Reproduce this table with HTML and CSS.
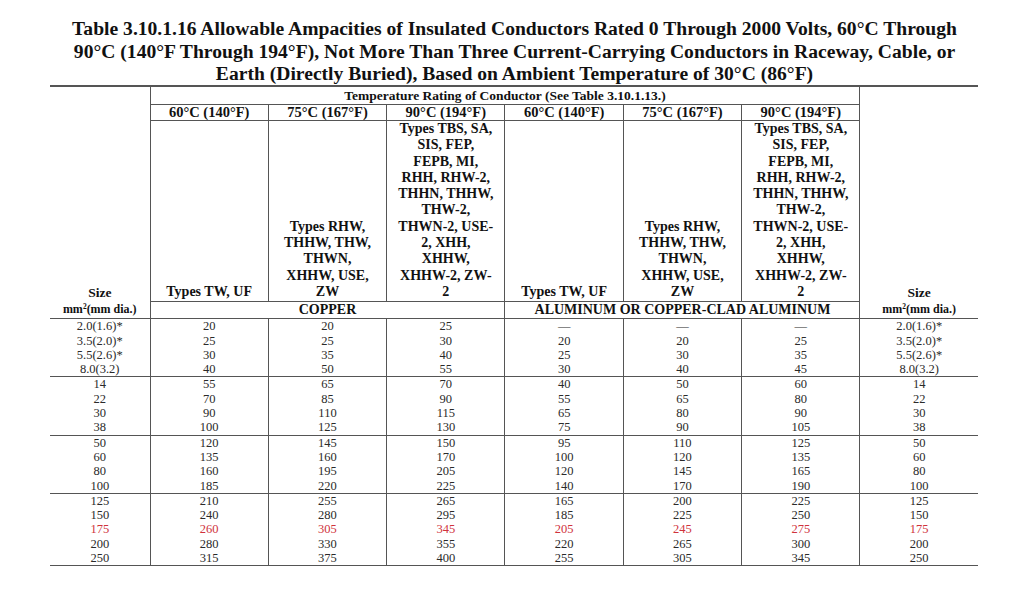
FILE: index.html
```html
<!DOCTYPE html>
<html>
<head>
<meta charset="utf-8">
<link rel="stylesheet" href="styles.css">
</head>
<body>
<div class="page">
  <h1 class="title">Table 3.10.1.16 Allowable Ampacities of Insulated Conductors Rated 0 Through 2000 Volts, 60°C Through<br>90°C (140°F Through 194°F), Not More Than Three Current-Carrying Conductors in Raceway, Cable, or<br>Earth (Directly Buried), Based on Ambient Temperature of 30°C (86°F)</h1>
  <table class="amp">
    <colgroup>
      <col class="c-size-l">
      <col class="c-val"><col class="c-val"><col class="c-val">
      <col class="c-val"><col class="c-val"><col class="c-val">
      <col class="c-size-r">
    </colgroup>
    <thead>
      <tr class="h-rating">
        <th rowspan="4" class="size-head left">Size<br><span class="mm">mm<sup>2</sup>(mm dia.)</span></th>
        <th colspan="6">Temperature Rating of Conductor (See Table 3.10.1.13.)</th>
        <th rowspan="4" class="size-head right">Size<br><span class="mm">mm<sup>2</sup>(mm dia.)</span></th>
      </tr>
      <tr class="h-temp">
        <th>60°C (140°F)</th><th>75°C (167°F)</th><th>90°C (194°F)</th>
        <th>60°C (140°F)</th><th>75°C (167°F)</th><th>90°C (194°F)</th>
      </tr>
      <tr class="h-types">
        <th>Types TW, UF</th>
        <th>Types RHW,<br>THHW, THW,<br>THWN,<br>XHHW, USE,<br>ZW</th>
        <th>Types TBS, SA,<br>SIS, FEP,<br>FEPB, MI,<br>RHH, RHW-2,<br>THHN, THHW,<br>THW-2,<br>THWN-2, USE-<br>2, XHH,<br>XHHW,<br>XHHW-2, ZW-<br>2</th>
        <th>Types TW, UF</th>
        <th>Types RHW,<br>THHW, THW,<br>THWN,<br>XHHW, USE,<br>ZW</th>
        <th>Types TBS, SA,<br>SIS, FEP,<br>FEPB, MI,<br>RHH, RHW-2,<br>THHN, THHW,<br>THW-2,<br>THWN-2, USE-<br>2, XHH,<br>XHHW,<br>XHHW-2, ZW-<br>2</th>
      </tr>
      <tr class="h-metal">
        <th colspan="3">COPPER</th>
        <th colspan="3">ALUMINUM OR COPPER-CLAD ALUMINUM</th>
      </tr>
    </thead>
    <tbody>
      <tr class="g"><td>2.0(1.6)*</td><td>20</td><td>20</td><td>25</td><td>—</td><td>—</td><td>—</td><td>2.0(1.6)*</td></tr>
      <tr><td>3.5(2.0)*</td><td>25</td><td>25</td><td>30</td><td>20</td><td>20</td><td>25</td><td>3.5(2.0)*</td></tr>
      <tr><td>5.5(2.6)*</td><td>30</td><td>35</td><td>40</td><td>25</td><td>30</td><td>35</td><td>5.5(2.6)*</td></tr>
      <tr><td>8.0(3.2)</td><td>40</td><td>50</td><td>55</td><td>30</td><td>40</td><td>45</td><td>8.0(3.2)</td></tr>
      <tr class="g"><td>14</td><td>55</td><td>65</td><td>70</td><td>40</td><td>50</td><td>60</td><td>14</td></tr>
      <tr><td>22</td><td>70</td><td>85</td><td>90</td><td>55</td><td>65</td><td>80</td><td>22</td></tr>
      <tr><td>30</td><td>90</td><td>110</td><td>115</td><td>65</td><td>80</td><td>90</td><td>30</td></tr>
      <tr><td>38</td><td>100</td><td>125</td><td>130</td><td>75</td><td>90</td><td>105</td><td>38</td></tr>
      <tr class="g"><td>50</td><td>120</td><td>145</td><td>150</td><td>95</td><td>110</td><td>125</td><td>50</td></tr>
      <tr><td>60</td><td>135</td><td>160</td><td>170</td><td>100</td><td>120</td><td>135</td><td>60</td></tr>
      <tr><td>80</td><td>160</td><td>195</td><td>205</td><td>120</td><td>145</td><td>165</td><td>80</td></tr>
      <tr><td>100</td><td>185</td><td>220</td><td>225</td><td>140</td><td>170</td><td>190</td><td>100</td></tr>
      <tr class="g"><td>125</td><td>210</td><td>255</td><td>265</td><td>165</td><td>200</td><td>225</td><td>125</td></tr>
      <tr><td>150</td><td>240</td><td>280</td><td>295</td><td>185</td><td>225</td><td>250</td><td>150</td></tr>
      <tr class="hl"><td>175</td><td>260</td><td>305</td><td>345</td><td>205</td><td>245</td><td>275</td><td>175</td></tr>
      <tr><td>200</td><td>280</td><td>330</td><td>355</td><td>220</td><td>265</td><td>300</td><td>200</td></tr>
      <tr class="last"><td>250</td><td>315</td><td>375</td><td>400</td><td>255</td><td>305</td><td>345</td><td>250</td></tr>
    </tbody>
  </table>
</div>
</body>
</html>
```

FILE: styles.css
```css
html, body {
  margin: 0;
  padding: 0;
  background: #ffffff;
}

.page {
  width: 1024px;
  padding: 18px 0 0 0;
  font-family: "Liberation Serif", "Times New Roman", serif;
  color: #222;
}

.title {
  margin: 0;
  font-size: 19.6px;
  line-height: 22.5px;
  font-weight: bold;
  text-align: center;
  color: #111;
  padding-left: 5px;
  height: 67px;
}

.amp {
  margin-left: 50px;
  width: 928px;
  border-collapse: collapse;
  table-layout: fixed;
  border-top: 2px solid #555;
}

.c-size-l { width: 100px; }
.c-val { width: 118.33px; }
.c-size-r { width: 118px; }

.amp th {
  font-weight: bold;
  font-size: 14px;
  color: #111;
  padding: 0;
  text-align: center;
  white-space: nowrap;
}

.amp thead th {
  border: 1px solid #555;
}

.amp th.size-head {
  vertical-align: bottom;
  line-height: 16px;
  padding-bottom: 1px;
}

.amp th.size-head.left {
  border-left: none;
}

.amp th.size-head.right {
  border-right: none;
}

.amp .mm {
  font-size: 12px;
  line-height: 14px;
}

.amp .mm sup {
  font-size: 7.5px;
  vertical-align: 4px;
  line-height: 0;
}

.h-rating th {
  height: 17px;
  line-height: 17px;
  border-top: none;
  font-size: 13.5px;
}

.h-temp th {
  height: 15px;
  line-height: 15px;
  font-size: 14.5px;
}

.h-types th {
  height: 179px;
  line-height: 16.3px;
  vertical-align: bottom;
  padding-bottom: 1px;
}

.h-metal th {
  height: 16px;
  line-height: 16px;
}

.amp td {
  font-size: 12.5px;
  line-height: 14.3px;
  height: 14.3px;
  padding: 0;
  text-align: center;
  color: #2a2a2a;
  border-left: 1px solid #555;
  border-right: 1px solid #555;
}

.amp td:first-child {
  border-left: none;
}

.amp td:last-child {
  border-right: none;
}

.amp tr.g td {
  border-top: 1px solid #555;
}

.amp tr.last td {
  border-bottom: 1px solid #555;
}

.amp tr.hl td {
  color: #d0323c;
}
```
